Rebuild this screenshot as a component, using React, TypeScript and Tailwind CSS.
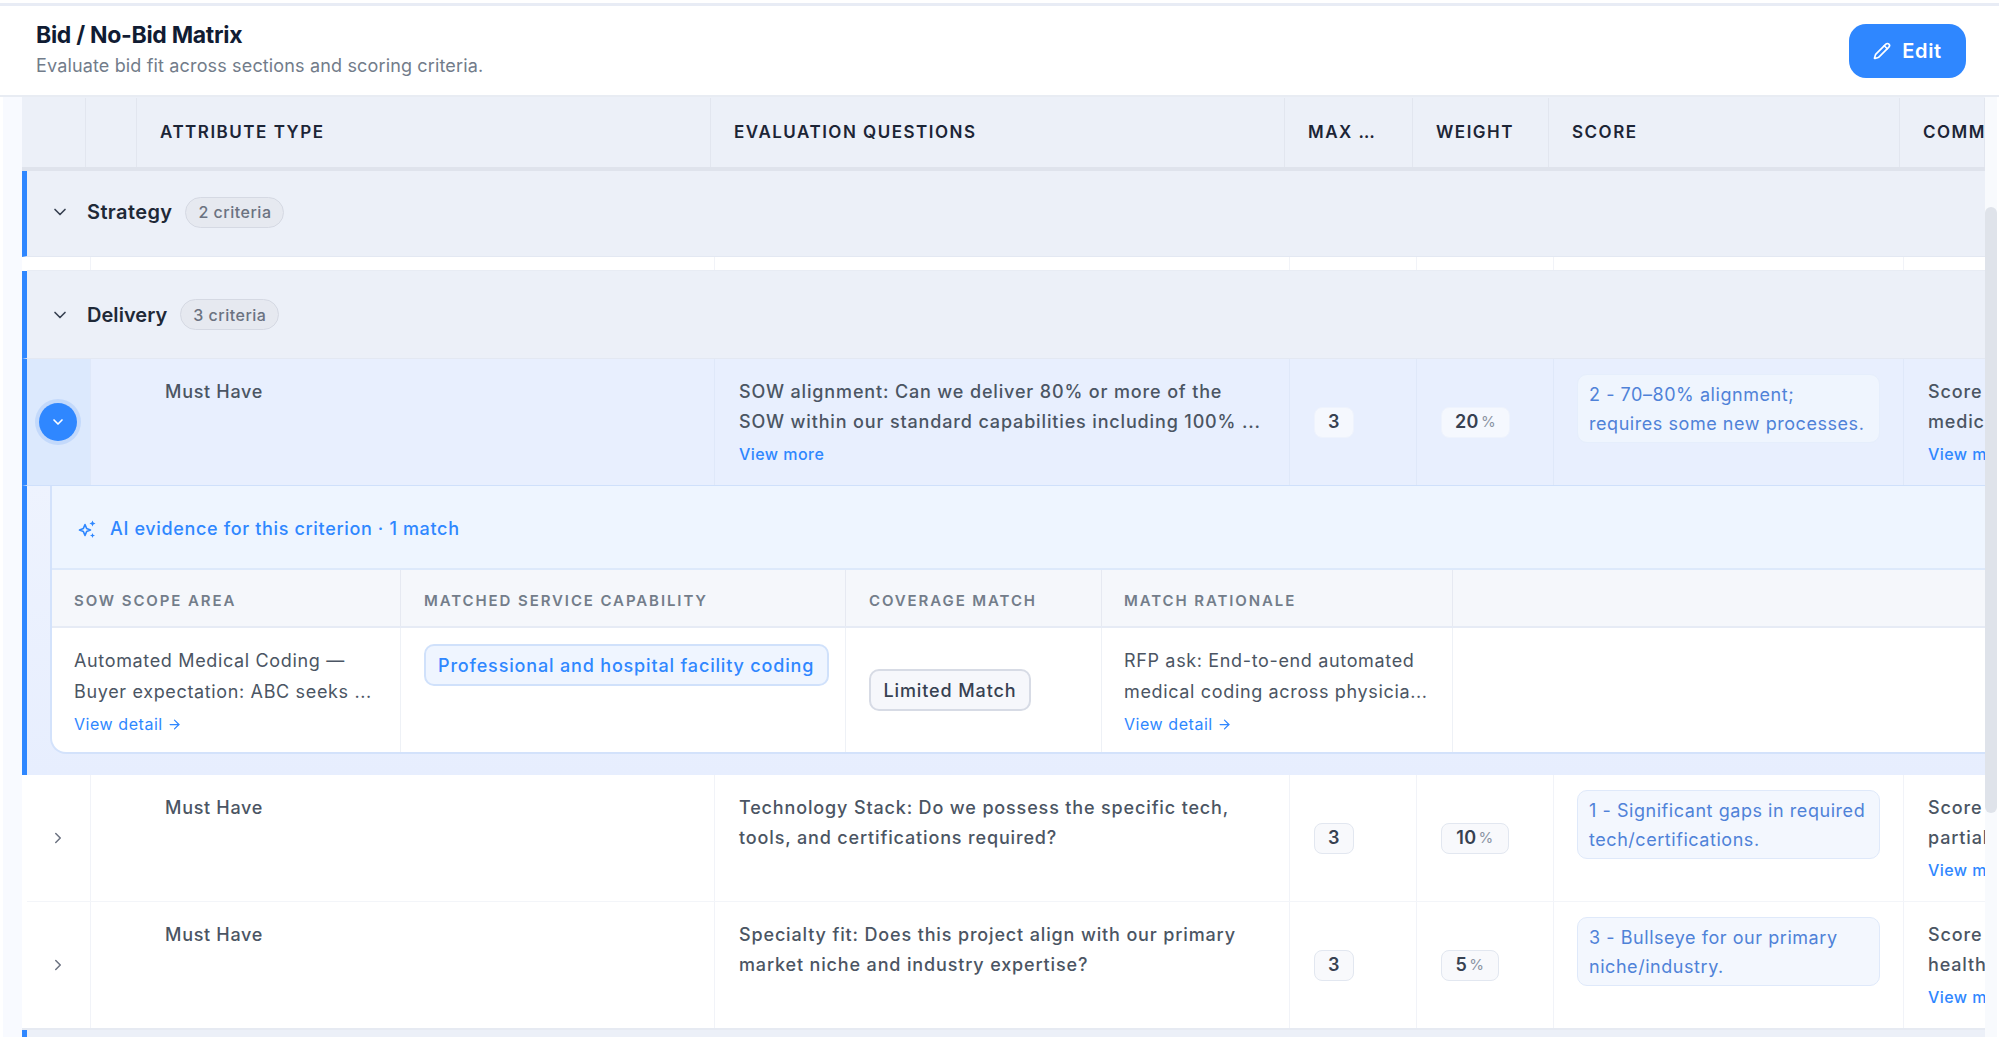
import { ArrowRight, ChevronDown, ChevronRight, Pencil } from "lucide-react";

const headCols = [
  { label: "", w: "w-[64px]" },
  { label: "", w: "w-[51px]" },
  { label: "ATTRIBUTE TYPE", w: "w-[574px]" },
  { label: "EVALUATION QUESTIONS", w: "w-[574px]" },
  { label: "MAX …", w: "w-[128px]" },
  { label: "WEIGHT", w: "w-[136px]" },
  { label: "SCORE", w: "w-[351px]" },
  { label: "COMMENTS", w: "w-[85px]" },
];

const rowGrid = "grid grid-cols-[64px_624px_575px_127px_137px_350px_81px]";

const Section = ({ name, count, size, nameClass }: { name: string; count: string; size: string; nameClass: string }) => (
  <div className={`flex items-center border-b border-[#e3e8f2] border-l-[5px] border-l-[#2f87ff] bg-[#ecf0f8] pl-[23px] ${size}`}>
    <ChevronDown className="h-[20px] w-[20px] text-[#374151]" strokeWidth={2} />
    <span className={`ml-[17px] text-[20px] font-semibold text-[#1f2937] ${nameClass}`}>{name}</span>
    <span className="ml-[13px] flex h-[31px] w-[99px] items-center justify-center rounded-full border border-[#d5d9e3] bg-[#e6e9f0] text-[16px] font-medium tracking-[0.5px] text-[#6b7280]">
      {count}
    </span>
  </div>
);

const Value = ({ value, unit, active, w }: { value: string; unit?: string; active?: boolean; w: string }) => (
  <span
    className={`flex h-[31px] items-center justify-center rounded-[8px] border text-[18px] font-semibold tracking-[0.4px] text-[#374151] ${w} ${
      active ? "border-[#eef3fd] bg-[#f5f8fe]" : "border-[#e2e7f0] bg-[#f8f9fc]"
    }`}
  >
    {value}
    {unit && <span className="ml-[2px] text-[15px] font-normal text-[#8b94a3]">{unit}</span>}
  </span>
);

type RowProps = {
  lines: string[];
  more?: boolean;
  weight: string;
  weightW: string;
  score: string[];
  comment: string;
  active?: boolean;
};

const Row = ({ lines, more, weight, weightW, score, comment, active }: RowProps) => {
  const cell = active ? "border-r border-[#dfe8f9]" : "border-r border-[#f1f3f8]";
  return (
    <div
      className={`${rowGrid} text-[18px] leading-[29.5px] text-[#4b5563] ${
        active ? "h-[127px] border-b border-[#cfe0fb] border-l-[5px] border-l-[#2f87ff] bg-[#e8effe]" : "ml-[5px] h-[126px] bg-white"
      }`}
    >
      <div className={`flex items-center justify-center pr-[2px] ${cell} ${active ? "bg-[#dce9fd]" : ""}`}>
        {active ? (
          <span className="flex h-[38px] w-[38px] items-center justify-center rounded-full bg-[#2f87ff] shadow-[0_0_0_4px_#c3d9fb]">
            <ChevronDown className="h-[16px] w-[16px] text-white" strokeWidth={2.5} />
          </span>
        ) : (
          <ChevronRight className="h-[18px] w-[18px] text-[#6b7280]" strokeWidth={2} />
        )}
      </div>
      <div className={`pl-[74px] pt-[18px] font-medium tracking-[0.7px] ${cell}`}>Must Have</div>
      <div className={`pl-[24px] pt-[18px] font-medium tracking-[0.85px] ${cell}`}>
        {lines.map((l) => (
          <div key={l} className="whitespace-nowrap">
            {l}
          </div>
        ))}
        {more && <div className="text-[16px] leading-[36px] tracking-[0.45px] text-[#2f87ff]">View more</div>}
      </div>
      <div className={`flex items-center pl-[24px] ${cell}`}>
        <Value value="3" active={active} w="w-[40px]" />
      </div>
      <div className={`flex items-center pl-[24px] ${cell}`}>
        <Value value={weight} unit="%" active={active} w={weightW} />
      </div>
      <div className={`pl-[23px] pt-[15px] ${cell}`}>
        <div
          className={`h-[69px] w-[303px] rounded-[10px] border px-[11px] pt-[6px] text-[18px] leading-[28.5px] tracking-[0.55px] text-[#4f82d8] ${
            active ? "border-[#e5eefc] bg-[#eff5fe]" : "border-[#dfe9fa] bg-[#f3f7fe]"
          }`}
        >
          {score.map((s) => (
            <div key={s} className="whitespace-nowrap">
              {s}
            </div>
          ))}
        </div>
      </div>
      <div className="overflow-hidden whitespace-nowrap pl-[24px] pt-[18px] font-medium tracking-[0.85px]">
        <div>Score reflects</div>
        <div>{comment}</div>
        <div className="text-[16px] leading-[36px] tracking-[0.45px] text-[#2f87ff]">View more</div>
      </div>
    </div>
  );
};

const ViewDetail = () => (
  <div className="mt-[2px] flex items-center gap-[4px] text-[16px] leading-[30px] tracking-[0.55px] text-[#2f87ff]">
    View detail <ArrowRight className="h-[15px] w-[15px]" strokeWidth={2} />
  </div>
);

const Evidence = () => (
  <div className="h-[289px] border-l-[5px] border-l-[#2f87ff] bg-gradient-to-b from-[#eef3fe] to-[#e7eefe] pl-[23px]">
    <div className="h-[268px] overflow-hidden rounded-bl-[16px] border-b-2 border-l-2 border-[#d3e2fb] bg-white">
      <div className="flex h-[84px] items-center gap-[13px] border-b-2 border-[#dde9fb] bg-[#eef5ff] pl-[25px] pt-[3px] text-[18px] font-medium tracking-[0.65px] text-[#2f87ff]">
        <svg viewBox="0 0 20 20" className="h-[20px] w-[20px]" fill="none">
          <path d="M8 5.5 L9.6 9.4 L13.5 11 L9.6 12.6 L8 16.5 L6.4 12.6 L2.5 11 L6.4 9.4 Z" stroke="#2f87ff" strokeWidth="1.6" strokeLinejoin="round" />
          <path d="M15.5 1.5 L16.4 3.6 L18.5 4.5 L16.4 5.4 L15.5 7.5 L14.6 5.4 L12.5 4.5 L14.6 3.6 Z" fill="#2f87ff" />
          <path d="M15.5 14 L16.2 15.8 L18 16.5 L16.2 17.2 L15.5 19 L14.8 17.2 L13 16.5 L14.8 15.8 Z" fill="#2f87ff" />
        </svg>
        AI evidence for this criterion · 1 match
      </div>
      <div className="grid h-[58px] grid-cols-[349px_445px_256px_351px_1fr] items-stretch border-b-2 border-[#e6ebf5] bg-[#f5f7fb] text-[15px] font-semibold tracking-[1.9px] text-[#737d8a]">
        <div className="flex items-center border-r border-[#e6e9f1] pl-[22px] pt-[6px]">SOW SCOPE AREA</div>
        <div className="flex items-center border-r border-[#e6e9f1] pl-[23px] pt-[6px]">MATCHED SERVICE CAPABILITY</div>
        <div className="flex items-center border-r border-[#e6e9f1] pl-[23px] pt-[6px]">COVERAGE MATCH</div>
        <div className="flex items-center border-r border-[#e6e9f1] pl-[22px] pt-[6px]">MATCH RATIONALE</div>
        <div />
      </div>
      <div className="grid h-[124px] grid-cols-[349px_445px_256px_351px_1fr] text-[18px] leading-[31px] tracking-[0.65px] text-[#4b5563]">
        <div className="whitespace-nowrap border-r border-[#eef1f6] pl-[22px] pt-[17px]">
          <div>Automated Medical Coding —</div>
          <div>Buyer expectation: ABC seeks ...</div>
          <ViewDetail />
        </div>
        <div className="border-r border-[#eef1f6] pl-[23px] pt-[16px]">
          <span className="flex h-[42px] w-[405px] items-center whitespace-nowrap rounded-[10px] border-2 border-[#d0e1fb] bg-[#eff5ff] pl-[12px] font-medium tracking-[0.83px] text-[#2f87ff]">
            Professional and hospital facility coding
          </span>
        </div>
        <div className="flex items-center border-r border-[#eef1f6] pl-[23px]">
          <span className="flex h-[42px] w-[162px] items-center justify-center rounded-[10px] border-2 border-[#d7dbe5] bg-[#f6f7fb] font-medium tracking-[0.9px] text-[#374151]">
            Limited Match
          </span>
        </div>
        <div className="whitespace-nowrap border-r border-[#eef1f6] pl-[22px] pt-[17px]">
          <div>RFP ask: End-to-end automated</div>
          <div>medical coding across physicia...</div>
          <ViewDetail />
        </div>
        <div />
      </div>
    </div>
  </div>
);

export default function App() {
  return (
    <div className="flex h-[1037px] w-[1999px] flex-col overflow-hidden bg-white font-['Inter',sans-serif]">
      <div className="mt-[3px] h-[3px] bg-[#e8ecf5]" />
      <header className="flex h-[91px] items-center justify-between border-b-2 border-[#e8ecf3] pl-[36px] pr-[33px]">
        <div className="pb-[2px]">
          <h1 className="mb-[2px] text-[23px] font-bold leading-[30px] tracking-[-0.3px] text-[#111c33]">Bid / No-Bid Matrix</h1>
          <p className="text-[18px] leading-[28px] tracking-[0.15px] text-[#727c8a]">Evaluate bid fit across sections and scoring criteria.</p>
        </div>
        <button className="flex h-[54px] w-[117px] items-center justify-center gap-[11px] rounded-[17px] bg-[#2f87ff] text-[20px] font-semibold tracking-[0.7px] text-white">
          <Pencil className="h-[18px] w-[18px]" strokeWidth={2.2} />
          Edit
        </button>
      </header>

      <div className="ml-[3px] flex min-h-0 flex-1">
        <div className="w-[19px] shrink-0 bg-[#f8faff]" />
        <main className="w-[1963px] shrink-0 overflow-hidden">
          <div className="flex h-[74px] border-b-4 border-[#dfe3ec] bg-[#ecf0f8] pt-px text-[17px] font-semibold tracking-[1.5px] text-[#1c2536]">
            {headCols.map((c) => (
              <div key={c.w + c.label} className={`flex shrink-0 items-center overflow-hidden whitespace-nowrap border-r border-[#e2e6ef] pl-[23px] ${c.w}`}>
                {c.label}
              </div>
            ))}
          </div>
          <Section name="Strategy" count="2 criteria" size="h-[86px] pb-[3px]" nameClass="tracking-[0.4px]" />
          <div className={`${rowGrid} ml-[5px] h-[14px] border-b border-[#e8ecf4] bg-white`}>
            {[0, 1, 2, 3, 4, 5].map((i) => (
              <div key={i} className="border-r border-[#f1f3f8]" />
            ))}
          </div>
          <Section name="Delivery" count="3 criteria" size="h-[88px]" nameClass="tracking-[0.05px]" />
          <Row
            active
            more
            lines={["SOW alignment: Can we deliver 80% or more of the", "SOW within our standard capabilities including 100% ..."]}
            weight="20"
            weightW="w-[69px]"
            score={["2 - 70–80% alignment;", "requires some new processes."]}
            comment="medical coding"
          />
          <Evidence />
          <Row
            lines={["Technology Stack: Do we possess the specific tech,", "tools, and certifications required?"]}
            weight="10"
            weightW="w-[68px]"
            score={["1 - Significant gaps in required", "tech/certifications."]}
            comment="partial match"
          />
          <div className="ml-[5px] h-px bg-[#f3f5f9]" />
          <Row
            lines={["Specialty fit: Does this project align with our primary", "market niche and industry expertise?"]}
            weight="5"
            weightW="w-[58px]"
            score={["3 - Bullseye for our primary", "niche/industry."]}
            comment="health system"
          />
          <div className="h-[2px] bg-[#e6eaf2]" />
          <div className="h-[20px] border-l-[5px] border-l-[#2f87ff] bg-[#ecf0f8]" />
        </main>
        <div className="flex-1 bg-white">
          <div className="h-full w-[12px] bg-[#f8fafd] pt-[110px]">
            <div className="h-[606px] rounded-full bg-[#dfe3ea]" />
          </div>
        </div>
      </div>
    </div>
  );
}
